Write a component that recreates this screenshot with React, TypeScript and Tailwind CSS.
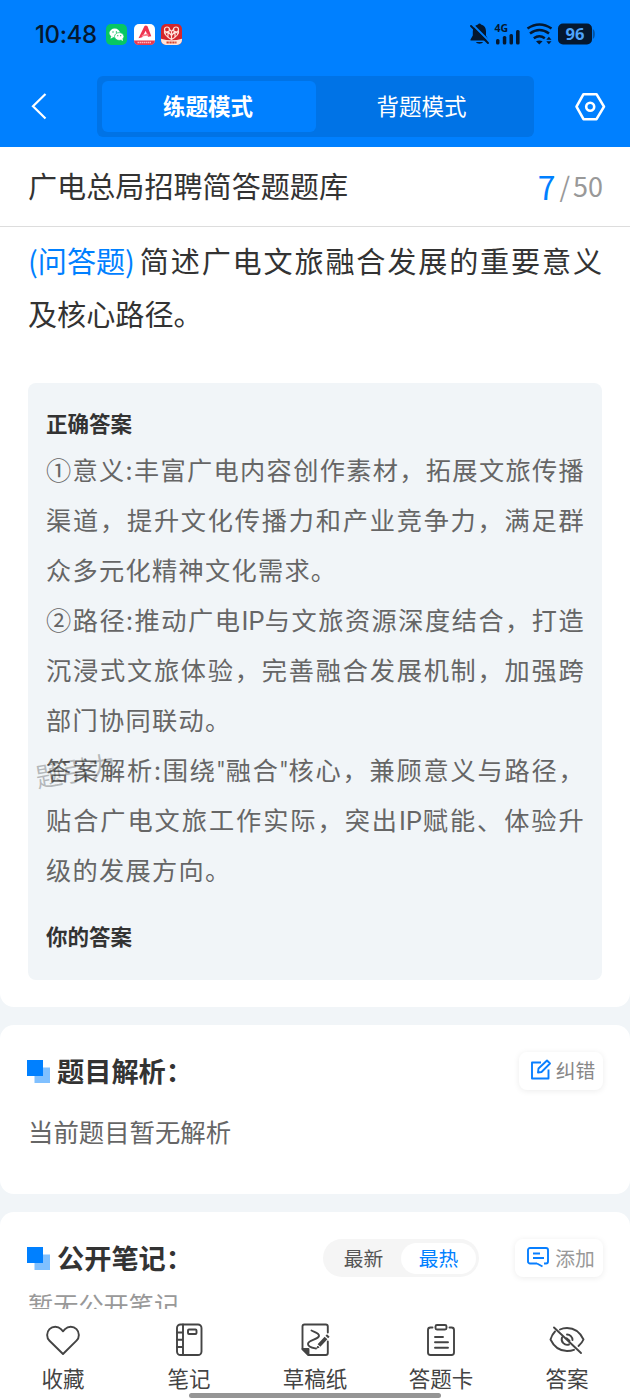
import React from "react";

const answer = [
  "①意义:丰富广电内容创作素材，拓展文旅传播",
  "渠道，提升文化传播力和产业竞争力，满足群",
  "众多元化精神文化需求。",
  "②路径:推动广电IP与文旅资源深度结合，打造",
  "沉浸式文旅体验，完善融合发展机制，加强跨",
  "部门协同联动。",
  "答案解析:围绕\"融合\"核心，兼顾意义与路径，",
  "贴合广电文旅工作实际，突出IP赋能、体验升",
  "级的发展方向。",
];

function AnswerLine({ text, last }: { text: string; last: boolean }) {
  const parts = text.split(/(IP|")/);
  return (
    <p className={last ? "h-[50px] whitespace-nowrap" : "mr-[-1px] h-[50px] whitespace-nowrap [text-align-last:justify]"}>
      {parts.map((part, i) =>
        part === "IP" || part === '"' ? (
          <span key={i} className="font-['Roboto'] leading-none tracking-[0.2px]">{part}</span>
        ) : (
          part
        ),
      )}
    </p>
  );
}

function StatusBar() {
  return (
    <div className="flex h-[68px] items-center pl-[35px] pr-[35px]">
      <span className="w-[64px] pt-[2px] whitespace-nowrap font-['Inter'] text-[24px] font-medium tracking-[-0.4px] text-[#05182f]">10:48</span>
      <div className="ml-[7px] flex gap-[6.5px]">
        <svg width="21" height="21" viewBox="0 0 21 21">
          <rect width="21" height="21" rx="5" fill="#07c763" />
          <ellipse cx="8.7" cy="9" rx="5.3" ry="4.4" fill="#fff" />
          <path d="M5 12l-.4 2.7 2.6-1.4z" fill="#fff" />
          <ellipse cx="13.2" cy="12.5" rx="4.7" ry="3.9" fill="#fff" stroke="#07c763" strokeWidth=".7" />
          <path d="M14.5 15.8l2.5 1.3-.5-2.3z" fill="#fff" />
          <g fill="#07b35a"><circle cx="7" cy="8" r=".7" /><circle cx="10.4" cy="8" r=".7" /><circle cx="11.8" cy="11.7" r=".6" /><circle cx="14.7" cy="11.7" r=".6" /></g>
        </svg>
        <svg width="21" height="21" viewBox="0 0 21 21">
          <rect width="21" height="21" rx="5" fill="#fff" />
          <path d="M0 16.5h21a4.5 4.5 0 0 1-4.5 4.500h-12A4.500 4.500 0 0 1 0 16.500z" fill="#e93b50" />
          <path d="M4.500 14.300L10.500 2q1.500-1 3 .300l3.800 10-3.300.500-2.300-6-3.500 6.500z" fill="#ee3450" />
          <path d="M8 11l6-1.500 1 2-7.500 1z" fill="#f8808c" />
          <path d="M3.500 18.500h14" stroke="#ffb5bc" strokeWidth="1.300" strokeDasharray="1.500 .5" />
        </svg>
        <svg width="21" height="21" viewBox="0 0 21 21">
          <rect width="21" height="21" rx="5" fill="#d3262b" />
          <g fill="none" stroke="#ffe3da" strokeWidth="1.200">
            <circle cx="6" cy="5.500" r="2.500" /><circle cx="15" cy="5.500" r="2.500" />
            <path d="M3.500 7q-1 4 7 8.500 8-4.500 7-8.500M8 5l2.500 2.500L13 5M4 9.500l3-2 3.500 4 3.500-4 3 2M7 8v5M14 8v5M10.500 8v7" />
          </g>
          <path d="M0 14.800q10.500 3 21 0v1.200a5 5 0 0 1-5 5H5a5 5 0 0 1-5-5z" fill="#ffe4d8" />
          <path d="M5.500 18.500h10" stroke="#d3442f" strokeWidth="2" strokeDasharray="2.300 .6" />
        </svg>
      </div>
      <svg className="ml-auto" width="126" height="24" viewBox="469 22 126 24" fill="#05182f">
        <path d="M478 24.500c.5-1.300 2.500-1.300 3 0 3.500.800 5 3.500 5 7v4l2.300 4v1H470.500v-1l2.300-4v-4c0-3.500 1.700-6.200 5.200-7z" />
        <path d="M476 42h7c-.8 2.200-6.200 2.200-7 0z" />
        <path d="M472 24l18 18" stroke="#0080ff" strokeWidth="2" />
        <path d="M471 26l17 17" stroke="#05182f" strokeWidth="1.900" strokeLinecap="round" />
        <text x="494.500" y="32" fontFamily="Open Sans" fontWeight="700" fontSize="10.500">4G</text>
        <rect x="496" y="39" width="3.500" height="5.500" rx="1.500" /><rect x="502.800" y="36" width="3.500" height="8.500" rx="1.500" /><rect x="509.500" y="34" width="3.500" height="10.500" rx="1.500" /><rect x="516" y="30" width="3.600" height="14.500" rx="1.500" />
        <g fill="none" stroke="#05182f" strokeWidth="2.500"><path d="M527.500 28.500q12-8 24 0M530 33.500q9.500-7 19 0M533.800 38.200q5.700-4 11 0" /></g>
        <path d="M536 41.300q3.300-1.800 6.600 0l-3.300 3.200zM546.300 39.800l2.600-3 2.600 3zM546.300 41.300l2.600 3 2.600-3z" />
        <rect x="558" y="23.500" width="34" height="21" rx="5" />
        <path d="M592.800 29q2 1 2 5t-2 5z" opacity=".45" />
        <text x="565.500" y="40" fill="#4ea4fb" fontFamily="Open Sans" fontWeight="700" fontSize="16.500">96</text>
      </svg>
    </div>
  );
}

function Header() {
  return (
    <header className="h-[147px] bg-[#0080ff]">
      <StatusBar />
      <div className="flex h-[77px] items-center">
        <div className="w-[97px] pl-[31px]">
          <svg width="17" height="28" viewBox="0 0 17 28" fill="none" stroke="#fff" strokeWidth="2.200"><path d="M14.500 1L2 13.300 14.500 25.500" /></svg>
        </div>
        <div className="flex h-[61px] w-[437px] rounded-md bg-[#0073e6] p-[5px]">
          <div className="flex w-[214px] items-center justify-center rounded-md bg-[#0080ff] pr-[2px] pb-[2px] text-[22.500px] font-bold text-white">练题模式</div>
          <div className="flex flex-1 items-center justify-center pr-[2px] pb-[2px] text-[22.500px] text-white">背题模式</div>
        </div>
        <svg className="ml-[40px]" width="32" height="30" viewBox="0 0 32 30" fill="none" stroke="#fff" strokeWidth="2.600" strokeLinejoin="round">
          <path d="M9.500 2.200h13L30 14.700l-7.500 12.500h-13L2.500 14.700z" /><circle cx="16.200" cy="14.700" r="4" />
        </svg>
      </div>
    </header>
  );
}

function SectionTitle({ children }: { children: React.ReactNode }) {
  return (
    <div className="flex items-center">
      <svg width="23" height="23" viewBox="0 0 23 23"><rect x="7.500" y="7.500" width="15.500" height="15.500" fill="#80c0ff" /><rect width="16" height="16" fill="#0080ff" /></svg>
      <h2 className="ml-[7px] -mt-[3px] whitespace-nowrap text-[27.200px] leading-[40px] font-bold text-[#333]">{children}<span>：</span></h2>
    </div>
  );
}

const icons = {
  heart: <path d="M20 34L6.500 20.700a8.300 8.300 0 0 1 0-11.600 8.100 8.100 0 0 1 11.500 0l2 2.200 2-2.200a8.100 8.100 0 0 1 11.500 0 8.300 8.300 0 0 1 0 11.600z" />,
  note: <><rect x="8" y="4.500" width="24.500" height="30.500" rx="3.500" /><path d="M14 4.500v30.500M8 12.500h6M8 19.700h6M8 27h6" /><rect x="19" y="9.500" width="8.500" height="4.500" rx="1" /></>,
  draft: <>
    <path d="M32.800 12.500V6.500a2 2 0 0 0-2-2H9.500a2 2 0 0 0-2 2V29l6 6h17.300a2 2 0 0 0 2-2V21.500" />
    <path d="M7.500 29h6v6z" fill="#444" />
    <path d="M16.500 10.500c3 1.500 8 2.500 7.500 5.500-.5 3.500-11 4-11 8 0 3.500 5 4 8 4.500" />
    <path d="M24 25.500l7-7.500" stroke="#444" strokeWidth="3.800" strokeLinecap="butt" />
    <path d="M31.800 17l1.500-1.600" stroke="#444" strokeWidth="3.600" strokeLinecap="butt" />
    <path d="M22.200 27.600l.5-1.500 1 1z" fill="#444" strokeWidth="1" />
  </>,
  card: <><path d="M11.500 7.500h-2a2.500 2.500 0 0 0-2.500 2.500v22.500a2.500 2.500 0 0 0 2.500 2.500h21a2.500 2.500 0 0 0 2.500-2.500V10a2.500 2.500 0 0 0-2.500-2.500h-2" /><rect x="14.500" y="5" width="11" height="4.500" rx="1.500" /><path d="M14 17h8M14 22.300h13M14 27.700h13" /></>,
  eye: <><path d="M8 11.500Q5 14.500 3.500 19.500q5.500 11.500 16.500 11.500 4 0 7-1.200M31.500 26q3.500-3 5-6.500Q31 8 20 8q-4 0-7 1.500M7 7.500l27 25.500M15 17.500a5.500 5.500 0 0 0 7 7M20 14.500a5.500 5.500 0 0 1 5.500 5.500M19.500 18.200l3 2.600" /></>,
};

function NavItem({ icon, label }: { icon: React.ReactNode; label: string }) {
  return (
    <div className="flex flex-1 flex-col items-center pt-[11px]">
      <svg width="40" height="40" viewBox="0 0 40 40" fill="none" stroke="#444" strokeWidth="1.900" strokeLinecap="round" strokeLinejoin="round">{icon}</svg>
      <span className="-mt-px text-[21.500px] leading-[38px] text-[#444]">{label}</span>
    </div>
  );
}

export default function App() {
  return (
    <div lang="zh-CN" className="flex h-[1400px] w-[630px] flex-col overflow-hidden bg-[#f1f5f8] font-['Noto_Sans_CJK_SC',sans-serif] text-[#333]">
      <Header />
      <main className="h-[1162px] overflow-hidden">
        <section className="h-[860px] rounded-b-[14px] bg-white">
          <div className="flex h-[80px] items-center justify-between border-b border-[#ddd] pr-[27px] pb-[2px] pl-[28px]">
            <h1 className="text-[29.100px]">广电总局招聘简答题题库</h1>
            <div className="flex items-center leading-none text-[#999]"><span className="text-[32px] text-[#0080ff]">7</span><span className="ml-[4px] text-[27px]">/</span><span className="ml-[3px] text-[27px]">50</span></div>
          </div>
          <div className="px-[28px] pt-[7px] text-[29.100px] leading-[53px]">
            <p className="whitespace-nowrap [text-align-last:justify]"><span className="mr-[3px] inline-block text-[#0080ff]">(问答题)</span>简述广电文旅融合发展的重要意义</p>
            <p>及核心路径。</p>
          </div>
          <div className="mx-[28px] mt-[43px] h-[597px] rounded-lg bg-[#f1f5f8] pt-[19px] pr-[18px] pl-[18px]">
            <h3 className="text-[21.500px] leading-[42px] font-bold">正确答案</h3>
            <div className="relative text-[25.200px] leading-[50px] tracking-[1.300px] text-[#666]">
              {answer.map((line, i) => (
                <AnswerLine key={line} text={line} last={i % 3 === 2} />
              ))}
              <span className="absolute top-[301px] left-[-11px] -rotate-[10deg] text-[27px] tracking-normal whitespace-nowrap text-black/25">题引力</span>
            </div>
            <h3 className="mt-[21px] text-[21.500px] leading-[42px] font-bold">你的答案</h3>
          </div>
        </section>
        <section className="mt-[18px] h-[169px] rounded-[14px] bg-white px-[27px] pt-[27px]">
          <div className="flex items-center justify-between">
            <SectionTitle>题目解析</SectionTitle>
            <button className="flex h-[38px] w-[84px] items-center justify-center gap-[4px] rounded-lg bg-white pl-[3px] text-[19.800px] leading-[28px] text-[#888] shadow-[0_1px_6px_#00000014]">
              <svg className="-mt-[2px]" width="22" height="22" viewBox="0 0 22 22" fill="none" stroke="#087fff" strokeWidth="1.900" strokeLinejoin="round"><path d="M11 3.500H2v16h16.500v-9" /><path d="M8 13.500l.500-4L17 1.500l3 3-8.500 8.500z" /></svg><span className="-mt-[2px]">纠错</span>
            </button>
          </div>
          <p className="ml-[1px] mt-[22px] text-[25.400px] leading-[38px] text-[#666]">当前题目暂无解析</p>
        </section>
        <section className="mt-[18px] h-[200px] rounded-t-[14px] bg-white px-[27px] pt-[27px]">
          <div className="flex items-center">
            <SectionTitle>公开笔记</SectionTitle>
            <div className="ml-auto flex h-[38px] w-[156px] items-center rounded-full bg-[#f5f5f5] p-[3px] text-[19.800px]">
              <span className="flex-1 text-center text-[#555]">最新</span><span className="flex h-[31px] w-[75px] items-center justify-center rounded-full bg-white text-[#0080ff]">最热</span>
            </div>
            <button className="ml-[36px] flex h-[38px] w-[88px] items-center justify-center gap-[6px] rounded-lg bg-white pl-[4px] text-[19.800px] leading-[28px] text-[#999] shadow-[0_1px_6px_#00000014]">
              <svg width="22" height="22" viewBox="0 0 22 22" fill="none" stroke="#087fff" strokeWidth="1.900" strokeLinejoin="round"><path d="M10 16.500H3a2 2 0 0 1-2-2V3a2 2 0 0 1 2-2h16a2 2 0 0 1 2 2v11.500a2 2 0 0 1-2 2h-2M10 16.500l5.500 3M6 6.500h7M6 11h11" /></svg><span>添加</span>
            </button>
          </div>
          <p className="ml-[1px] mt-[8px] text-[25.200px] leading-[38px] text-[#999]">暂无公开笔记</p>
        </section>
      </main>
      <nav className="relative flex h-[91px] bg-white">
        <NavItem icon={icons.heart} label="收藏" />
        <NavItem icon={icons.note} label="笔记" />
        <NavItem icon={icons.draft} label="草稿纸" />
        <NavItem icon={icons.card} label="答题卡" />
        <NavItem icon={icons.eye} label="答案" />
        <div className="absolute bottom-[2px] left-[189px] h-[5px] w-[252px] rounded-full bg-[#959595]" />
      </nav>
    </div>
  );
}
